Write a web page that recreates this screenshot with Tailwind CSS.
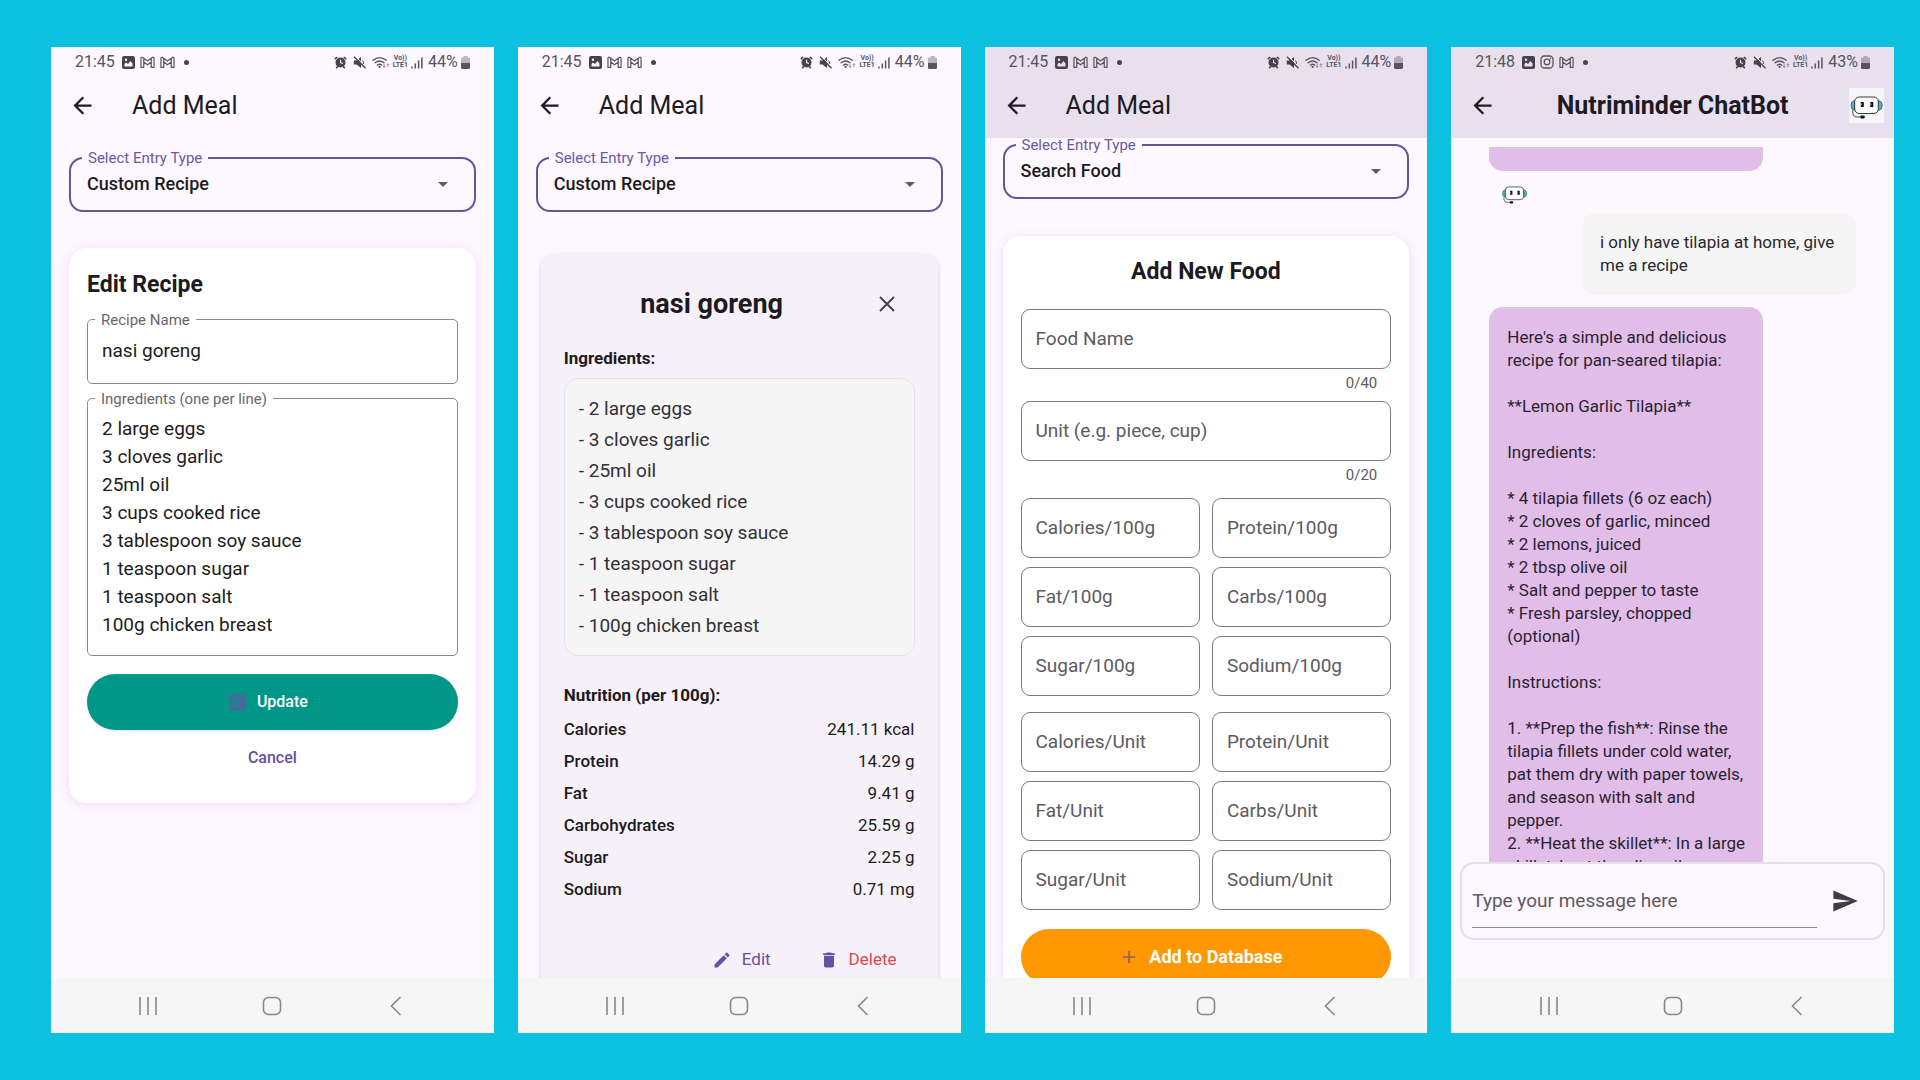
<!DOCTYPE html>
<html lang="en">
<head>
<meta charset="utf-8">
<meta name="viewport" content="width=device-width, initial-scale=1">
<title>Nutriminder</title>
<script src="https://cdn.jsdelivr.net/npm/@tailwindcss/browser@4"></script>
</head>
<body class="h-screen bg-[#0cc0df] font-['Roboto',sans-serif] text-[#1d1b20]">
<svg class="hidden" aria-hidden="true">
  <symbol id="i-image" viewBox="0 0 13 13"><path fill="currentColor" fill-rule="evenodd" d="M2 0h9a2 2 0 0 1 2 2v9a2 2 0 0 1-2 2H2a2 2 0 0 1-2-2V2a2 2 0 0 1 2-2zM2.500 8v2.500h8V7.500L8.500 5 6 8 4 6.500zM4 2.500a1.200 1.200 0 1 0 0 2.400 1.200 1.200 0 0 0 0-2.400z"/></symbol>
  <symbol id="i-gmail" viewBox="0 0 16 13"><path fill="none" stroke="currentColor" stroke-width="1.300" stroke-linejoin="round" d="M1 11.800V2.200C1 1 2.300.7 3.200 1.300L8 5l4.800-3.700c.9-.6 2.200-.3 2.200.9v9.600h-3V6L8 9 4 6v5.800zM4 6V2M12 6V2"/></symbol>
  <symbol id="i-insta" viewBox="0 0 14 14"><g fill="none" stroke="currentColor" stroke-width="1.300"><rect x="1" y="1" width="12" height="12" rx="3.500"/><circle cx="7" cy="7" r="2.800"/></g><circle cx="10.400" cy="3.600" r=".8" fill="currentColor"/></symbol>
  <symbol id="i-alarm" viewBox="0 0 13 13"><path fill="currentColor" fill-rule="evenodd" d="M6.500 1.500a5 5 0 1 1 0 10 5 5 0 0 1 0-10zM6 3.800v3.300l2.700 1 .4-1L7.100 6.300V3.800z"/><path stroke="currentColor" stroke-width="1.600" d="M.8 3.200 3.200 1M12.200 3.200 9.800 1M2.200 12.200l1.600-1.800M10.800 12.200 9.200 10.400"/></symbol>
  <symbol id="i-mute" viewBox="0 0 13 13"><path fill="currentColor" d="M.8 4.500h2.700L8 1v11L3.500 8.500H.8z"/><path stroke="#fdf7ff" stroke-width="1" d="M2.200 0 13 11"/><path stroke="currentColor" stroke-width="1.400" d="m1 .8 11.500 11.500"/><path fill="none" stroke="currentColor" d="M9.500 4.500q1.500 1.500.8 3.500"/></symbol>
  <symbol id="i-wifi" viewBox="0 0 19 13"><g fill="none" stroke="currentColor" stroke-width="1.400" stroke-linecap="round"><path d="M1 4.200q7-5.800 14 0M3.300 6.800q4.700-3.800 9.400 0M5.600 9.300q2.400-1.900 4.800 0"/></g><circle cx="8" cy="11.200" r="1.200" fill="currentColor"/><path fill="currentColor" opacity=".55" d="m12.800 12.500-1.800-2.200h1.200V8h1.200v2.300h1.200zM16.800 7l1.800 2.200h-1.200v2.300h-1.200V9.200H15z"/></symbol>
  <symbol id="i-signal" viewBox="0 0 12 13"><path stroke="currentColor" stroke-width="1.500" d="M1 12.500v-2M4.300 12.500V7.500M7.600 12.500V4.500M10.900 12.500v-11"/></symbol>
  <symbol id="i-battery" viewBox="0 0 9 13"><path fill="currentColor" opacity=".4" d="M2.500 0h4v1.500H8A1 1 0 0 1 9 2.500V7H0V2.500a1 1 0 0 1 1-1h1.500z"/><path fill="currentColor" d="M0 7h9v4.500A1.500 1.500 0 0 1 7.500 13h-6A1.500 1.500 0 0 1 0 11.500z"/></symbol>
  <symbol id="i-back" viewBox="0 0 24 24"><path fill="currentColor" d="M20 11H7.830l5.590-5.590L12 4l-8 8 8 8 1.410-1.410L7.830 13H20z"/></symbol>
  <symbol id="i-caret" viewBox="0 0 10 5"><path fill="currentColor" d="M0 0h10L5 5z"/></symbol>
  <symbol id="i-recents" viewBox="0 0 24 24"><path stroke="currentColor" stroke-width="1.600" d="M4 3v18M12 3v18M20 3v18"/></symbol>
  <symbol id="i-home" viewBox="0 0 24 24"><rect x="3.500" y="3.500" width="17" height="17" rx="5" fill="none" stroke="currentColor" stroke-width="1.600"/></symbol>
  <symbol id="i-navback" viewBox="0 0 24 24"><path d="M16.500 3 7.500 12l9 9" fill="none" stroke="currentColor" stroke-width="1.600"/></symbol>
  <symbol id="i-robot" viewBox="0 0 35 35">
    <path d="M5.500 12.500Q2 13 2 17.500t3.500 5zM29.500 12.500q3.800.5 3.800 5t-3.800 5z" fill="#58adb8" stroke="#2c6f78" stroke-width=".8"/>
    <rect x="5.700" y="9" width="23.600" height="16.500" rx="4.500" fill="#fff" stroke="#33363a" stroke-width="1"/>
    <path d="M11.800 14h3v5h-3zM21.300 14h3v5h-3z" fill="#111"/><path d="M11.800 15.500h1.200V17h-1.200zM21.300 15.500h1.200V17h-1.200z" fill="#999"/>
    <path d="M3.800 22.500v2.500q.3 4 4.700 4h3" fill="none" stroke="#33363a" stroke-width=".9"/><rect x="11.300" y="27.500" width="4.400" height="3" rx="1" fill="#111"/>
  </symbol>
</svg>

<main class="grid h-full grid-cols-4 gap-6 py-[47px] pr-[26px] pl-[51px]">

  <!-- Edit recipe -->
  <section class="flex min-w-0 flex-col overflow-hidden bg-[#fdf7ff]">
    <header class="shrink-0">
      <div class="flex h-7 items-center justify-between px-6 pt-0.5 text-base text-[#59545d]">
        <div class="flex items-center gap-[5px]"><span class="mr-0.5">21:45</span><svg class="size-[13px] text-[#47424b]"><use href="#i-image"/></svg><svg class="h-[13px] w-[15px]"><use href="#i-gmail"/></svg><svg class="h-[13px] w-[15px]"><use href="#i-gmail"/></svg><span class="ml-1 size-[5px] rounded-full bg-[#47424b]"></span></div>
        <div class="flex items-center gap-[3px]"><svg class="mr-[3px] size-[13px] text-[#47424b]"><use href="#i-alarm"/></svg><svg class="mr-[3px] size-[13px] text-[#47424b]"><use href="#i-mute"/></svg><svg class="h-[13px] w-[18px]"><use href="#i-wifi"/></svg><span class="text-center text-[7px] leading-[7px] font-bold">Vo))<br>LTE1</span><svg class="mr-0.5 h-[13px] w-3"><use href="#i-signal"/></svg><span>44%</span><svg class="h-[13px] w-[9px]"><use href="#i-battery"/></svg></div>
      </div>
      <div class="flex h-[63px] items-center gap-9 pb-0.5 pl-[18px]">
        <button aria-label="Back"><svg class="size-[27px]"><use href="#i-back"/></svg></button>
        <h1 class="text-[25px] leading-8">Add Meal</h1>
      </div>
    </header>
    <div class="min-h-0 flex-1 overflow-hidden px-[18px] pt-[19px]">
      <div class="relative">
        <label for="type1" class="absolute -top-1.5 left-[13px] bg-[#fdf7ff] px-1.5 text-[15px] leading-[14px] text-[#6b5aa0]">Select Entry Type</label>
        <select id="type1" class="block h-[55px] w-full appearance-none rounded-[14px] border-2 border-[#675496] px-4 pb-0.5 text-lg font-medium"><option>Custom Recipe</option></select>
        <svg class="pointer-events-none absolute top-[25px] right-7 h-[5px] w-2.5 text-[#5f5a64]"><use href="#i-caret"/></svg>
      </div>
      <form class="mt-9 flex flex-col rounded-[18px] bg-white px-[18px] pt-[23px] pb-[17px] shadow-[0_2px_12px_rgba(150,50,170,0.12)]">
        <h2 class="text-[23px] leading-7 font-bold">Edit Recipe</h2>
        <div class="relative mt-5">
          <label for="rname" class="absolute -top-1.5 left-2 bg-white px-1.5 text-[15px] leading-[14px] text-[#69666c]">Recipe Name</label>
          <input id="rname" value="nasi goreng" class="block h-[65px] w-full rounded-[5px] border border-[#8c8a8e] px-3.5 pb-0.5 text-[19px]">
        </div>
        <div class="relative mt-3.5">
          <label for="ring" class="absolute -top-1.5 left-2 bg-white px-1.5 text-[15px] leading-[14px] text-[#69666c]">Ingredients (one per line)</label>
          <textarea id="ring" class="block h-[258px] w-full resize-none overflow-hidden rounded-[5px] border border-[#8c8a8e] px-3.5 pt-4 text-[19px] leading-7">2 large eggs
3 cloves garlic
25ml oil
3 cups cooked rice
3 tablespoon soy sauce
1 teaspoon sugar
1 teaspoon salt
100g chicken breast</textarea>
        </div>
        <button type="button" class="mt-[18px] flex h-14 items-center justify-center gap-3 rounded-full bg-[#009688] pr-2 text-base font-medium text-white shadow-sm"><svg class="size-4 text-[#57609c]" viewBox="0 0 16 16"><path fill="none" stroke="currentColor" stroke-width="3" d="M1.500 1.500h13v13h-13z"/><path stroke="currentColor" stroke-width="1.400" d="M4 5.500h8M4 8h8M4 10.500h8"/></svg>Update</button>
        <button type="button" class="h-14 text-base font-medium text-[#6750a4]">Cancel</button>
      </form>
    </div>
    <nav class="flex h-[55px] shrink-0 items-center justify-center gap-[100px] bg-[#f6f6f6] text-[#88868a]"><button aria-label="Recents"><svg class="size-6"><use href="#i-recents"/></svg></button><button aria-label="Home"><svg class="size-6"><use href="#i-home"/></svg></button><button aria-label="Back"><svg class="size-6"><use href="#i-navback"/></svg></button></nav>
  </section>

  <!-- Recipe details -->
  <section class="flex min-w-0 flex-col overflow-hidden bg-[#fdf7ff]">
    <header class="shrink-0">
      <div class="flex h-7 items-center justify-between px-6 pt-0.5 text-base text-[#59545d]">
        <div class="flex items-center gap-[5px]"><span class="mr-0.5">21:45</span><svg class="size-[13px] text-[#47424b]"><use href="#i-image"/></svg><svg class="h-[13px] w-[15px]"><use href="#i-gmail"/></svg><svg class="h-[13px] w-[15px]"><use href="#i-gmail"/></svg><span class="ml-1 size-[5px] rounded-full bg-[#47424b]"></span></div>
        <div class="flex items-center gap-[3px]"><svg class="mr-[3px] size-[13px] text-[#47424b]"><use href="#i-alarm"/></svg><svg class="mr-[3px] size-[13px] text-[#47424b]"><use href="#i-mute"/></svg><svg class="h-[13px] w-[18px]"><use href="#i-wifi"/></svg><span class="text-center text-[7px] leading-[7px] font-bold">Vo))<br>LTE1</span><svg class="mr-0.5 h-[13px] w-3"><use href="#i-signal"/></svg><span>44%</span><svg class="h-[13px] w-[9px]"><use href="#i-battery"/></svg></div>
      </div>
      <div class="flex h-[63px] items-center gap-9 pb-0.5 pl-[18px]">
        <button aria-label="Back"><svg class="size-[27px]"><use href="#i-back"/></svg></button>
        <h1 class="text-[25px] leading-8">Add Meal</h1>
      </div>
    </header>
    <div class="min-h-0 flex-1 overflow-hidden px-[18px] pt-[19px]">
      <div class="relative">
        <label for="type2" class="absolute -top-1.5 left-[13px] bg-[#fdf7ff] px-1.5 text-[15px] leading-[14px] text-[#6b5aa0]">Select Entry Type</label>
        <select id="type2" class="block h-[55px] w-full appearance-none rounded-[14px] border-2 border-[#675496] px-4 pb-0.5 text-lg font-medium"><option>Custom Recipe</option></select>
        <svg class="pointer-events-none absolute top-[25px] right-7 h-[5px] w-2.5 text-[#5f5a64]"><use href="#i-caret"/></svg>
      </div>
      <article class="mx-[5px] mt-[41px] rounded-[14px] bg-[#f6f1f8] px-[23px] pt-[23px] pb-6 shadow-[0_3px_4px_rgba(60,40,70,0.22)]">
        <div class="flex h-[55px] items-center">
          <h2 class="flex-1 text-center text-[27px] leading-8 font-bold">nasi goreng</h2>
          <button aria-label="Close" class="flex size-[55px] items-center justify-center text-[#49454f]"><svg class="size-4" viewBox="0 0 16 16"><path d="m1 1 14 14M15 1 1 15" stroke="currentColor" stroke-width="2"/></svg></button>
        </div>
        <h3 class="mt-[15px] text-[17px] leading-6 font-bold">Ingredients:</h3>
        <ul class="mt-2 rounded-[14px] border border-[#e6e1e8] bg-[#f5f5f5] p-3.5 text-[19px] leading-[31px] text-[#333036]">
          <li>- 2 large eggs</li><li>- 3 cloves garlic</li><li>- 25ml oil</li><li>- 3 cups cooked rice</li><li>- 3 tablespoon soy sauce</li><li>- 1 teaspoon sugar</li><li>- 1 teaspoon salt</li><li>- 100g chicken breast</li>
        </ul>
        <h3 id="nutri" class="mt-[27px] text-[17px] leading-6 font-bold">Nutrition (per 100g):</h3>
        <table aria-labelledby="nutri" class="mt-1.5 w-full text-[17px] leading-6">
          <tbody>
            <tr class="h-8"><th class="text-left font-medium">Calories</th><td class="text-right">241.11 kcal</td></tr>
            <tr class="h-8"><th class="text-left font-medium">Protein</th><td class="text-right">14.29 g</td></tr>
            <tr class="h-8"><th class="text-left font-medium">Fat</th><td class="text-right">9.41 g</td></tr>
            <tr class="h-8"><th class="text-left font-medium">Carbohydrates</th><td class="text-right">25.59 g</td></tr>
            <tr class="h-8"><th class="text-left font-medium">Sugar</th><td class="text-right">2.25 g</td></tr>
            <tr class="h-8"><th class="text-left font-medium">Sodium</th><td class="text-right">0.71 mg</td></tr>
          </tbody>
        </table>
        <div class="mt-8 flex h-[46px] items-center justify-end gap-12 pr-[18px] text-[17px]">
          <button class="flex items-center gap-2.5 text-[#6750a4]"><svg class="size-5" viewBox="0 0 24 24"><path fill="currentColor" d="M3 17.250V21h3.750L17.810 9.940l-3.750-3.750zM20.710 7.040a1 1 0 0 0 0-1.410l-2.340-2.340a1 1 0 0 0-1.410 0l-1.830 1.830 3.750 3.750z"/></svg>Edit</button>
          <button class="flex items-center gap-2.5 text-[#e2474a]"><svg class="size-5 text-[#6750a4]" viewBox="0 0 24 24"><path fill="currentColor" d="M6 19c0 1.100.9 2 2 2h8c1.100 0 2-.9 2-2V7H6zM19 4h-3.500l-1-1h-5l-1 1H5v2h14z"/></svg>Delete</button>
        </div>
      </article>
    </div>
    <nav class="flex h-[55px] shrink-0 items-center justify-center gap-[100px] bg-[#f6f6f6] text-[#88868a]"><button aria-label="Recents"><svg class="size-6"><use href="#i-recents"/></svg></button><button aria-label="Home"><svg class="size-6"><use href="#i-home"/></svg></button><button aria-label="Back"><svg class="size-6"><use href="#i-navback"/></svg></button></nav>
  </section>

  <!-- Add new food -->
  <section class="flex min-w-0 flex-col overflow-hidden bg-[#fdf7ff]">
    <header class="shrink-0 bg-[#e8e0ef]">
      <div class="flex h-7 items-center justify-between px-6 pt-0.5 text-base text-[#59545d]">
        <div class="flex items-center gap-[5px]"><span class="mr-0.5">21:45</span><svg class="size-[13px] text-[#47424b]"><use href="#i-image"/></svg><svg class="h-[13px] w-[15px]"><use href="#i-gmail"/></svg><svg class="h-[13px] w-[15px]"><use href="#i-gmail"/></svg><span class="ml-1 size-[5px] rounded-full bg-[#47424b]"></span></div>
        <div class="flex items-center gap-[3px]"><svg class="mr-[3px] size-[13px] text-[#47424b]"><use href="#i-alarm"/></svg><svg class="mr-[3px] size-[13px] text-[#47424b]"><use href="#i-mute"/></svg><svg class="h-[13px] w-[18px]"><use href="#i-wifi"/></svg><span class="text-center text-[7px] leading-[7px] font-bold">Vo))<br>LTE1</span><svg class="mr-0.5 h-[13px] w-3"><use href="#i-signal"/></svg><span>44%</span><svg class="h-[13px] w-[9px]"><use href="#i-battery"/></svg></div>
      </div>
      <div class="flex h-[63px] items-center gap-9 pb-0.5 pl-[18px]">
        <button aria-label="Back"><svg class="size-[27px]"><use href="#i-back"/></svg></button>
        <h1 class="text-[25px] leading-8">Add Meal</h1>
      </div>
    </header>
    <div class="min-h-0 flex-1 overflow-hidden px-[18px] pt-1.5">
      <div class="relative">
        <label for="type3" class="absolute -top-1.5 left-[13px] bg-[#fdf7ff] px-1.5 text-[15px] leading-[14px] text-[#6b5aa0]">Select Entry Type</label>
        <select id="type3" class="block h-[55px] w-full appearance-none rounded-[14px] border-2 border-[#675496] px-4 pb-0.5 text-lg font-medium"><option>Search Food</option></select>
        <svg class="pointer-events-none absolute top-[25px] right-7 h-[5px] w-2.5 text-[#5f5a64]"><use href="#i-caret"/></svg>
      </div>
      <form class="mt-[37px] flex flex-col rounded-[18px] bg-white px-[18px] pt-[22px] pb-[18px] shadow-[0_2px_12px_rgba(150,50,170,0.12)]">
        <h2 class="text-center text-[23px] leading-7 font-bold">Add New Food</h2>
        <input aria-label="Food Name" placeholder="Food Name" class="mt-[23px] h-[60px] w-full rounded-[9px] border border-[#7d7a80] px-3.5 pb-0.5 text-[19px] placeholder:text-[#5d5a60]">
        <p class="mt-1 pr-3.5 text-right text-[15px] leading-5 text-[#5d5a60]">0/40</p>
        <input aria-label="Unit" placeholder="Unit (e.g. piece, cup)" class="mt-2 h-[60px] w-full rounded-[9px] border border-[#7d7a80] px-3.5 pb-0.5 text-[19px] placeholder:text-[#5d5a60]">
        <p class="mt-1 pr-3.5 text-right text-[15px] leading-5 text-[#5d5a60]">0/20</p>
        <div class="mt-[13px] grid grid-cols-2 gap-x-3 gap-y-[9px]">
          <input aria-label="Calories/100g" placeholder="Calories/100g" class="h-[60px] w-full rounded-[9px] border border-[#7d7a80] px-3.5 pb-0.5 text-[19px] placeholder:text-[#5d5a60]">
          <input aria-label="Protein/100g" placeholder="Protein/100g" class="h-[60px] w-full rounded-[9px] border border-[#7d7a80] px-3.5 pb-0.5 text-[19px] placeholder:text-[#5d5a60]">
          <input aria-label="Fat/100g" placeholder="Fat/100g" class="h-[60px] w-full rounded-[9px] border border-[#7d7a80] px-3.5 pb-0.5 text-[19px] placeholder:text-[#5d5a60]">
          <input aria-label="Carbs/100g" placeholder="Carbs/100g" class="h-[60px] w-full rounded-[9px] border border-[#7d7a80] px-3.5 pb-0.5 text-[19px] placeholder:text-[#5d5a60]">
          <input aria-label="Sugar/100g" placeholder="Sugar/100g" class="h-[60px] w-full rounded-[9px] border border-[#7d7a80] px-3.5 pb-0.5 text-[19px] placeholder:text-[#5d5a60]">
          <input aria-label="Sodium/100g" placeholder="Sodium/100g" class="h-[60px] w-full rounded-[9px] border border-[#7d7a80] px-3.5 pb-0.5 text-[19px] placeholder:text-[#5d5a60]">
        </div>
        <div class="mt-4 grid grid-cols-2 gap-x-3 gap-y-[9px]">
          <input aria-label="Calories/Unit" placeholder="Calories/Unit" class="h-[60px] w-full rounded-[9px] border border-[#7d7a80] px-3.5 pb-0.5 text-[19px] placeholder:text-[#5d5a60]">
          <input aria-label="Protein/Unit" placeholder="Protein/Unit" class="h-[60px] w-full rounded-[9px] border border-[#7d7a80] px-3.5 pb-0.5 text-[19px] placeholder:text-[#5d5a60]">
          <input aria-label="Fat/Unit" placeholder="Fat/Unit" class="h-[60px] w-full rounded-[9px] border border-[#7d7a80] px-3.5 pb-0.5 text-[19px] placeholder:text-[#5d5a60]">
          <input aria-label="Carbs/Unit" placeholder="Carbs/Unit" class="h-[60px] w-full rounded-[9px] border border-[#7d7a80] px-3.5 pb-0.5 text-[19px] placeholder:text-[#5d5a60]">
          <input aria-label="Sugar/Unit" placeholder="Sugar/Unit" class="h-[60px] w-full rounded-[9px] border border-[#7d7a80] px-3.5 pb-0.5 text-[19px] placeholder:text-[#5d5a60]">
          <input aria-label="Sodium/Unit" placeholder="Sodium/Unit" class="h-[60px] w-full rounded-[9px] border border-[#7d7a80] px-3.5 pb-0.5 text-[19px] placeholder:text-[#5d5a60]">
        </div>
        <button type="button" class="mt-[19px] flex h-14 items-center justify-center gap-3.5 rounded-full bg-[#ff9800] pr-1.5 text-lg font-bold text-white"><svg class="size-3 text-[#8a5f68]" viewBox="0 0 12 12"><path d="M6 0v12M0 6h12" stroke="currentColor" stroke-width="1.600"/></svg>Add to Database</button>
      </form>
    </div>
    <nav class="flex h-[55px] shrink-0 items-center justify-center gap-[100px] bg-[#f6f6f6] text-[#88868a]"><button aria-label="Recents"><svg class="size-6"><use href="#i-recents"/></svg></button><button aria-label="Home"><svg class="size-6"><use href="#i-home"/></svg></button><button aria-label="Back"><svg class="size-6"><use href="#i-navback"/></svg></button></nav>
  </section>

  <!-- Chat -->
  <section class="flex min-w-0 flex-col overflow-hidden bg-[#fdf7ff]">
    <header class="shrink-0 bg-[#e8e0ef]">
      <div class="flex h-7 items-center justify-between px-6 pt-0.5 text-base text-[#59545d]">
        <div class="flex items-center gap-[5px]"><span class="mr-0.5">21:48</span><svg class="size-[13px] text-[#47424b]"><use href="#i-image"/></svg><svg class="size-3.5"><use href="#i-insta"/></svg><svg class="h-[13px] w-[15px]"><use href="#i-gmail"/></svg><span class="ml-1 size-[5px] rounded-full bg-[#47424b]"></span></div>
        <div class="flex items-center gap-[3px]"><svg class="mr-[3px] size-[13px] text-[#47424b]"><use href="#i-alarm"/></svg><svg class="mr-[3px] size-[13px] text-[#47424b]"><use href="#i-mute"/></svg><svg class="h-[13px] w-[18px]"><use href="#i-wifi"/></svg><span class="text-center text-[7px] leading-[7px] font-bold">Vo))<br>LTE1</span><svg class="mr-0.5 h-[13px] w-3"><use href="#i-signal"/></svg><span>43%</span><svg class="h-[13px] w-[9px]"><use href="#i-battery"/></svg></div>
      </div>
      <div class="flex h-[63px] items-center pr-2.5 pb-0.5 pl-[18px]">
        <button aria-label="Back"><svg class="size-[27px]"><use href="#i-back"/></svg></button>
        <h1 class="flex-1 text-center text-[25px] leading-8 font-bold">Nutriminder ChatBot</h1>
        <svg class="size-[35px] bg-[#f6f5f8]"><use href="#i-robot"/></svg>
      </div>
    </header>
    <div class="mt-[9px] flex min-h-0 flex-1 flex-col overflow-hidden px-[38px] text-[17px] leading-[23px]">
      <div class="h-6 w-[274px] shrink-0 rounded-b-[14px] bg-[#e0bee8]"></div>
      <svg class="mt-[9px] mb-1.5 ml-3 size-[27px] shrink-0"><use href="#i-robot"/></svg>
      <p class="w-[274px] shrink-0 self-end rounded-[14px] bg-[#f5f5f5] py-[18px] pr-2 pl-[18px] text-[#2b282e]">i only have tilapia at home, give<br>me a recipe</p>
      <p class="mt-3 w-[274px] shrink-0 rounded-[14px] bg-[#e0bee8] py-[19px] pl-[18px] whitespace-pre text-[#2b1f33]">Here's a simple and delicious
recipe for pan-seared tilapia:

**Lemon Garlic Tilapia**

Ingredients:

* 4 tilapia fillets (6 oz each)
* 2 cloves of garlic, minced
* 2 lemons, juiced
* 2 tbsp olive oil
* Salt and pepper to taste
* Fresh parsley, chopped
(optional)

Instructions:

1. **Prep the fish**: Rinse the
tilapia fillets under cold water,
pat them dry with paper towels,
and season with salt and
pepper.
2. **Heat the skillet**: In a large
skillet, heat the olive oil over</p>
    </div>
    <form class="mx-[9px] mb-[38px] flex h-[78px] shrink-0 items-center rounded-[14px] border-2 border-[#e6dfe9] pr-6 pl-2.5">
      <input aria-label="Message" placeholder="Type your message here" class="h-[54px] min-w-0 flex-1 border-b border-[#8c8a8e] text-[19px] placeholder:text-[#5d5a60]">
      <button type="button" aria-label="Send" class="ml-3.5 text-[#3f3a44]"><svg class="size-7" viewBox="0 0 24 24"><path fill="currentColor" d="M2.010 21 23 12 2.010 3 2 10l15 2-15 2z"/></svg></button>
    </form>
    <nav class="flex h-[55px] shrink-0 items-center justify-center gap-[100px] bg-[#f6f6f6] text-[#88868a]"><button aria-label="Recents"><svg class="size-6"><use href="#i-recents"/></svg></button><button aria-label="Home"><svg class="size-6"><use href="#i-home"/></svg></button><button aria-label="Back"><svg class="size-6"><use href="#i-navback"/></svg></button></nav>
  </section>
</main>
</body>
</html>
